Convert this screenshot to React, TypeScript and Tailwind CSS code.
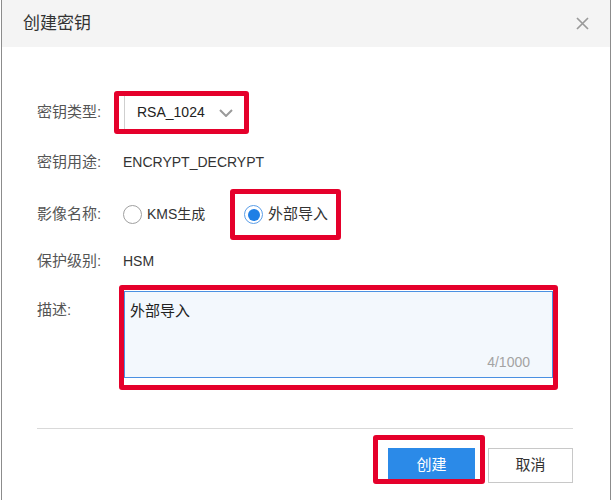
export default function App() {
  return (
    <div className="w-[612px] h-[500px] bg-white overflow-hidden font-['Liberation_Sans','Noto_Sans_CJK_SC',sans-serif]">
      <div className="ml-[1px] w-[610px] h-full border-x border-[#8c8c8c] flex flex-col">
        {/* header */}
        <div className="h-[47px] bg-[#f4f4f4] flex items-center justify-between pl-[21px] pr-[21px]">
          <span className="text-[17px] text-[#333]">创建密钥</span>
          <svg width="13" height="13" viewBox="0 0 13 13">
            <path d="M1 1L12 12M12 1L1 12" stroke="#9a9a9a" strokeWidth="1.7" />
          </svg>
        </div>

        <div className="flex flex-col pl-[35px] pr-[37px]">
          {/* key type */}
          <div className="mt-[44px] h-[43px] flex items-center">
            <div className="w-[77px] text-[15px] text-[#555]">密钥类型:</div>
            <div className="w-[135px] h-[43px] border-[5px] border-[#e5002b] rounded-[3px] flex pl-[5px]">
              <div className="h-full border-l border-[#cfcfcf] flex items-center pl-[12px]">
                <span className="text-[14px] text-[#222]">RSA_1024</span>
                <svg className="ml-[14px]" width="14" height="8" viewBox="0 0 14 8">
                  <path d="M1 1L7 7L13 1" stroke="#9a9a9a" strokeWidth="2" fill="none" />
                </svg>
              </div>
            </div>
          </div>

          {/* usage */}
          <div className="mt-[18px] h-[20px] flex items-center">
            <div className="w-[86px] text-[15px] text-[#555]">密钥用途:</div>
            <span className="text-[14px] text-[#333]">ENCRYPT_DECRYPT</span>
          </div>

          {/* origin */}
          <div className="mt-[17px] h-[51px] flex items-center">
            <div className="w-[86px] text-[15px] text-[#555]">影像名称:</div>
            <div className="w-[107px] flex items-center">
              <span className="w-[19px] h-[19px] rounded-full border border-[#a0a0a0] bg-white" />
              <span className="ml-[5px] text-[14px] text-[#333]">KMS生成</span>
            </div>
            <div className="w-[111px] h-[51px] border-[5px] border-[#e5002b] rounded-[3px] flex items-center pl-[9px]">
              <span className="w-[19px] h-[19px] rounded-full border-[1.5px] border-[#5b9ee8] bg-white flex items-center justify-center">
                <span className="w-[12px] h-[12px] rounded-full bg-[#1f7fe5]" />
              </span>
              <span className="ml-[5px] text-[15px] text-[#333]">外部导入</span>
            </div>
          </div>

          {/* protection */}
          <div className="mt-[11px] h-[20px] flex items-center">
            <div className="w-[86px] text-[15px] text-[#555]">保护级别:</div>
            <span className="text-[14px] text-[#333]">HSM</span>
          </div>

          {/* description */}
          <div className="mt-[14px] flex items-start">
            <div className="w-[82px] mt-[15px] leading-[20px] text-[15px] text-[#555]">描述:</div>
            <div className="w-[439px] h-[105px] border-[5px] border-[#e5002b] rounded-[3px]">
              <div className="mt-[1px] h-[87px] border border-[#4a90e2] bg-[#f3f8fd] flex flex-col justify-between pl-[5px] pt-[9px] pr-[22px] pb-[5px]">
                <span className="text-[15px] leading-[20px] text-[#222]">外部导入</span>
                <span className="self-end text-[14px] leading-[20px] text-[#a3a3a3]">4/1000</span>
              </div>
            </div>
          </div>

          <div className="mt-[38px] border-t border-[#d9d9d9]" />

          {/* buttons */}
          <div className="mt-[6px] flex justify-end items-start">
            <div className="w-[112px] h-[49px] border-[5px] border-[#e5002b] rounded-[3px] overflow-hidden pl-[10px] pt-[8px]">
              <div className="w-[87px] h-[35px] bg-[#2b8ae8] flex items-center justify-center text-[15px] text-white">
                创建
              </div>
            </div>
            <div className="ml-[3px] mt-[13px] w-[85px] h-[35px] border border-[#c8c8c8] flex items-center justify-center text-[15px] text-[#333]">
              取消
            </div>
          </div>
        </div>
      </div>
    </div>
  )
}
